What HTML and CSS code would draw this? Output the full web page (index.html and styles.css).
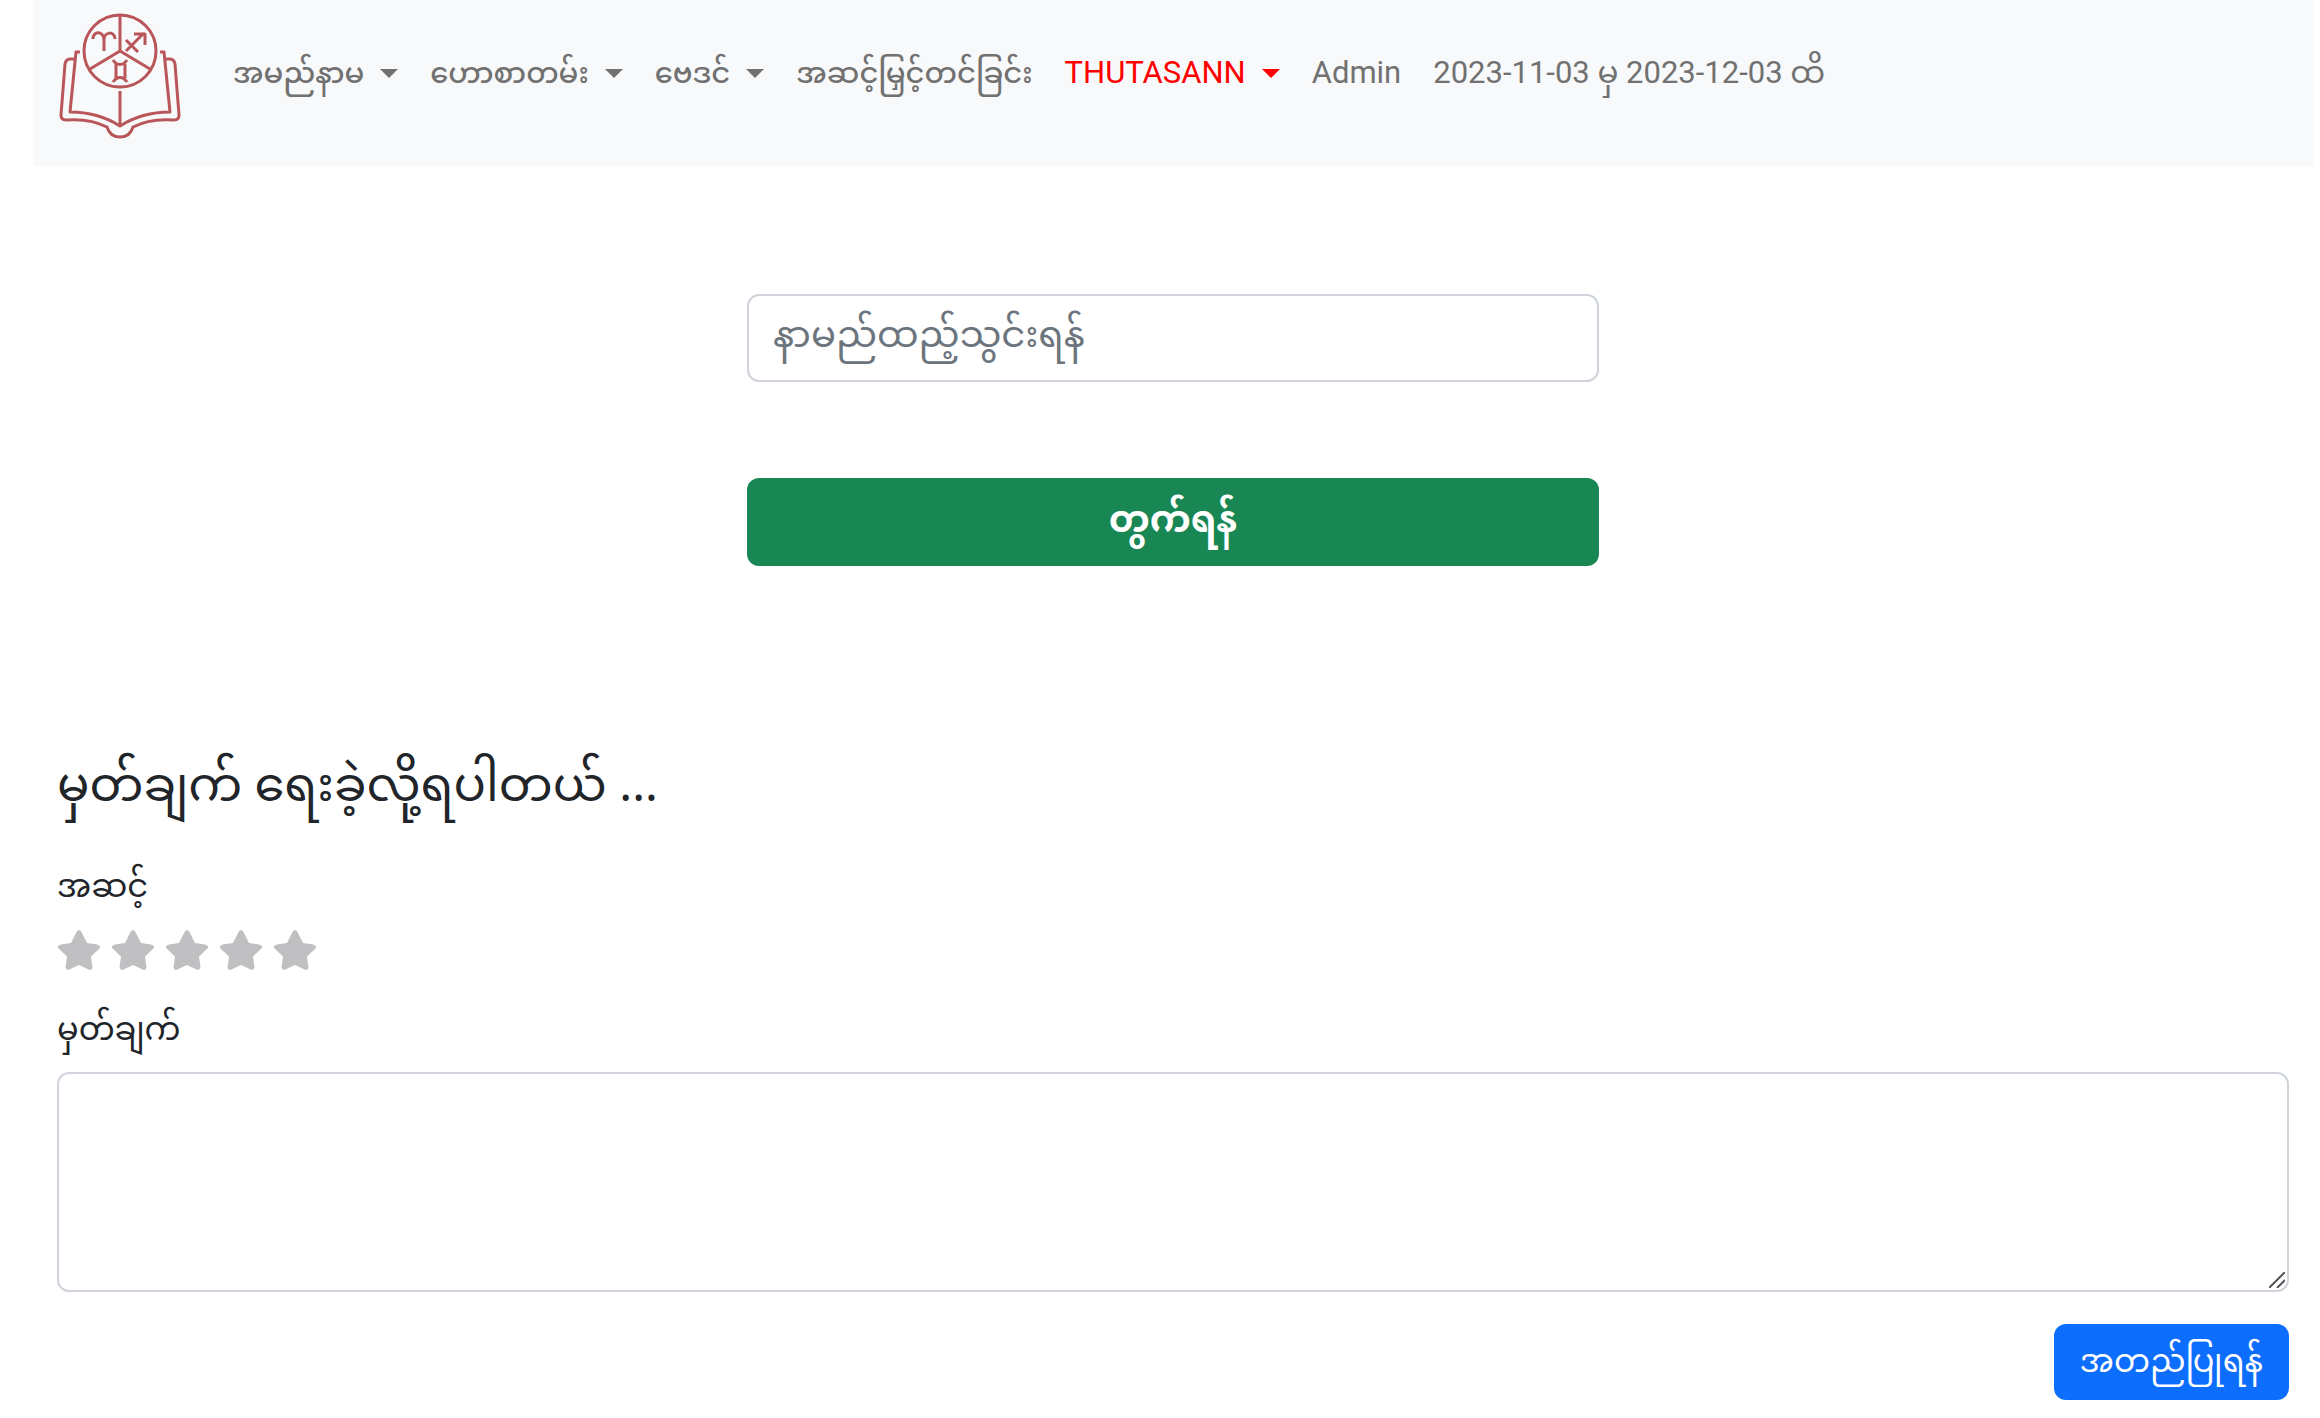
FILE: index.html
```html
<!DOCTYPE html>
<html lang="my">
<head>
<meta charset="utf-8">
<meta name="viewport" content="width=device-width, initial-scale=1">
<title>THUTASANN</title>
<link rel="stylesheet" href="styles.css">
</head>
<body>
<header class="navbar">
  <a class="brand" href="#" aria-label="THUTASANN">
    <svg class="logo" viewBox="0 0 124 128" aria-hidden="true">
      <g fill="none" stroke="#b9565a" stroke-width="3" stroke-linejoin="round">
        <circle cx="62" cy="40" r="36"/>
        <path d="M62 4v36L32 58M62 40l30 18"/>
        <path d="M35 28c0-9 11-8 11 1v11M46 29c0-9 11-9 11-1"/>
        <path d="M68 40l18-18M76 23h11v11M68 29l12 12"/>
        <path d="M55 49c4 6 10 6 14 0M55 71c4-6 10-6 14 0M58 53v14M67 53v14"/>
        <path d="M22 41h-4L12 101q28 0 50 14 22-14 50-14L106 41h-4"/>
        <path d="M62 80v34"/>
        <path d="M17 48h-5q-4 0-5 5L3 104q0 5 5 5 24-2 41 7 3 10 13 10t13-10q17-9 41-7 5 0 5-5l-4-51q-1-5-5-5h-5"/>
      </g>
    </svg>
  </a>
  <nav class="menu">
    <a class="menu-link caret" href="#">အမည်နာမ</a>
    <a class="menu-link caret" href="#">ဟောစာတမ်း</a>
    <a class="menu-link caret" href="#">ဗေဒင်</a>
    <a class="menu-link" href="#">အဆင့်မြှင့်တင်ခြင်း</a>
    <a class="menu-link latin caret user" href="#">THUTASANN</a>
    <a class="menu-link latin" href="#">Admin</a>
    <a class="menu-link latin" href="#">2023-11-03 မှ 2023-12-03 ထိ</a>
  </nav>
</header>
<main class="content">
  <form class="name-form">
    <input class="field name-field" type="text" placeholder="နာမည်ထည့်သွင်းရန်" aria-label="နာမည်ထည့်သွင်းရန်">
    <button class="btn calculate" type="button">တွက်ရန်</button>
  </form>
  <form class="review">
    <h1 class="review-title">မှတ်ချက် ရေးခဲ့လို့ရပါတယ် ...</h1>
    <span class="label" id="rating-label">အဆင့်</span>
    <div class="stars" role="group" aria-labelledby="rating-label">
      <button class="star" type="button" aria-label="1"><svg viewBox="0 0 42 40"><path d="M18.500 2Q21 -2 23.500 2L29 13L39 14.500Q44 16 41 19L33 26.500L34.500 37Q34 41 30.500 39.500L21 35L11.500 39.500Q8 41 7.500 37L9 26.500L1 19Q-2 16 3 14.500L13 13Z"/></svg></button>
      <button class="star" type="button" aria-label="2"><svg viewBox="0 0 42 40"><path d="M18.500 2Q21 -2 23.500 2L29 13L39 14.500Q44 16 41 19L33 26.500L34.500 37Q34 41 30.500 39.500L21 35L11.500 39.500Q8 41 7.500 37L9 26.500L1 19Q-2 16 3 14.500L13 13Z"/></svg></button>
      <button class="star" type="button" aria-label="3"><svg viewBox="0 0 42 40"><path d="M18.500 2Q21 -2 23.500 2L29 13L39 14.500Q44 16 41 19L33 26.500L34.500 37Q34 41 30.500 39.500L21 35L11.500 39.500Q8 41 7.500 37L9 26.500L1 19Q-2 16 3 14.500L13 13Z"/></svg></button>
      <button class="star" type="button" aria-label="4"><svg viewBox="0 0 42 40"><path d="M18.500 2Q21 -2 23.500 2L29 13L39 14.500Q44 16 41 19L33 26.500L34.500 37Q34 41 30.500 39.500L21 35L11.500 39.500Q8 41 7.500 37L9 26.500L1 19Q-2 16 3 14.500L13 13Z"/></svg></button>
      <button class="star" type="button" aria-label="5"><svg viewBox="0 0 42 40"><path d="M18.500 2Q21 -2 23.500 2L29 13L39 14.500Q44 16 41 19L33 26.500L34.500 37Q34 41 30.500 39.500L21 35L11.500 39.500Q8 41 7.500 37L9 26.500L1 19Q-2 16 3 14.500L13 13Z"/></svg></button>
    </div>
    <label class="label" for="comment">မှတ်ချက်</label>
    <div class="comment-box">
      <textarea class="field comment" id="comment"></textarea>
      <svg class="grip" viewBox="0 0 16 16" aria-hidden="true"><path d="M0 16L16 0M8 16l8-8" fill="none" stroke="#555" stroke-width="2"/></svg>
    </div>
    <button class="btn submit" type="button">အတည်ပြုရန်</button>
  </form>
</main>
</body>
</html>
```
FILE: styles.css
```css
* { box-sizing: border-box; }

body {
  margin: 0 7px 0 33px;
  background: #fff;
  color: #212529;
  font-family: "Noto Sans", "Noto Sans Myanmar", Padauk, "Myanmar Text", sans-serif;
  font-size: 32px;
  line-height: 48px;
}

.navbar {
  display: flex;
  align-items: flex-start;
  gap: 32px;
  height: 166px;
  padding: 11px 24px;
  background: #f8f9fb;
}

.brand { padding: 0 1px; }
.logo { display: block; width: 124px; height: 128px; }

.menu {
  display: flex;
  gap: 32px;
  padding: 38px 18px;
  font-family: Roboto, "Noto Sans Myanmar", Padauk, sans-serif;
}

.menu-link {
  display: flex;
  align-items: center;
  gap: 16px;
  line-height: 48px;
  font-size: 29px;
  font-weight: 500;
  color: #717171;
  text-decoration: none;
  white-space: nowrap;
}

.latin { font-size: 31px; font-weight: 400; }
.user { color: #f00; }

.caret::after {
  content: "";
  border: 9px solid transparent;
  border-top-color: currentColor;
  border-bottom: 0;
}

.content { padding: 128px 24px 0; }

.name-form {
  display: flex;
  flex-direction: column;
  gap: 96px;
  width: 852px;
  max-width: 100%;
  margin: 0 auto;
}

.field {
  width: 100%;
  border: 2px solid #ced4da;
  border-radius: 12px;
  background: #fff;
  color: inherit;
  font: inherit;
}

.name-field { height: 88px; padding: 0 24px 12px; font-size: 37px; }
.name-field::placeholder { color: #6c757d; opacity: 1; }

.btn {
  border: 0;
  border-radius: 12px;
  color: #fff;
  font: inherit;
}

.calculate { height: 88px; padding: 0 24px 8px; background: #198754; font-size: 37px; font-weight: 700; }

.review { display: flex; flex-direction: column; padding-top: 181px; }

.review-title { margin: 0 0 42px; font-size: 48px; font-weight: 400; line-height: 72px; }

.label { line-height: 48px; }

.stars { display: flex; gap: 12px; margin: 21px 0 34px; padding-left: 1px; }

.star { width: 42px; height: 40px; padding: 0; border: 0; background: none; }
.star svg { display: block; fill: #c0bfc2; }

.comment-box { position: relative; margin: 20px 0 32px; }
.comment { display: block; height: 220px; padding: 12px 24px; resize: vertical; }
.comment::-webkit-resizer { background: transparent; }

.grip {
  position: absolute;
  right: 4px;
  bottom: 4px;
  width: 16px;
  height: 16px;
  pointer-events: none;
}

.submit { align-self: flex-end; height: 76px; padding: 0 26px 4px; background: #0d6efd; }
```
